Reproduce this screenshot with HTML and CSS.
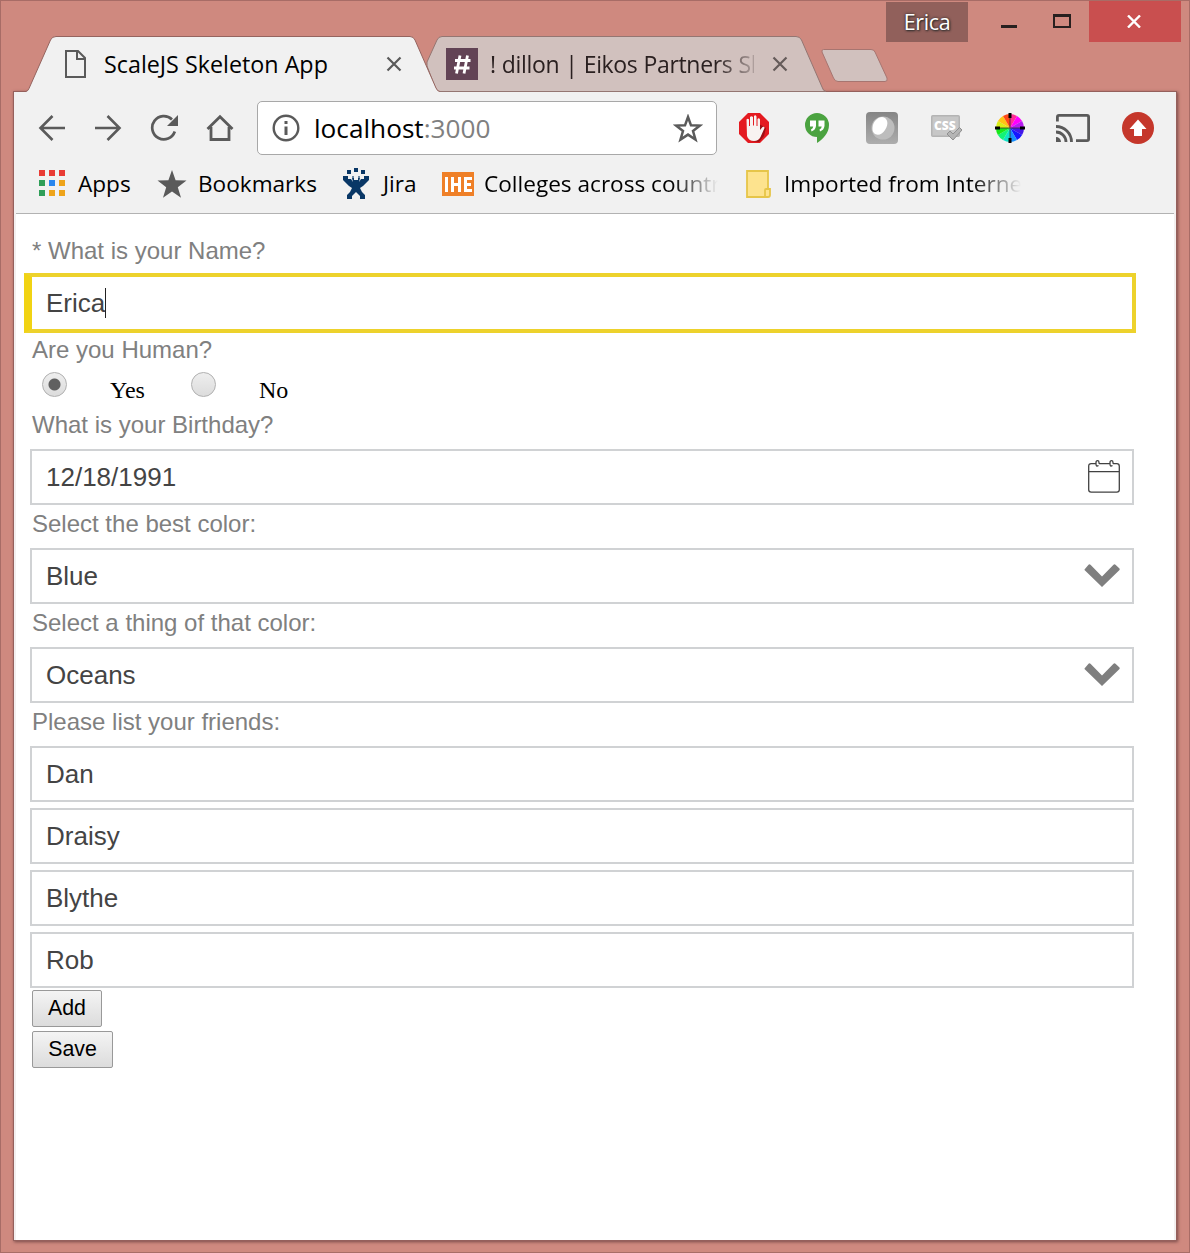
FILE: index.html
```html
<!DOCTYPE html>
<html lang="en">
<head>
<meta charset="utf-8">
<title>ScaleJS Skeleton App</title>
<link rel="stylesheet" href="styles.css">
</head>
<body>
<div class="window">
  <header class="titlebar">
    <div class="tabs">
      <div class="tab tab-active">
        <svg class="tab-shape" width="414" height="57" viewBox="0 0 414 57"><path d="M0 55.5Q2 55 3 52.500L24.500 4Q26 .5 30 .5H384Q387.500 .5 389 4L410 52Q411.500 55.500 414 55.500V57H0Z" fill="#f1f1f1"/><path d="M0 55.5Q2 55 3 52.500L24.500 4Q26 .5 30 .5H384Q387.500 .5 389 4L410 52Q411.500 55.500 414 55.500" fill="none" stroke="#95645f"/></svg>
        <svg class="icon page-icon" width="22" height="28" viewBox="0 0 22 28"><path d="M1 1H13L20 8V27H1ZM12 1V9H20" fill="none" stroke="#5a5a5a" stroke-width="2"/></svg>
        <span class="tab-title title-active">ScaleJS Skeleton App</span>
        <svg class="icon tab-close" width="16" height="16" viewBox="0 0 16 16"><path d="M1.500 1.500L14.500 14.500M14.500 1.500L1.500 14.500" stroke="#5a5a5a" stroke-width="2.200"/></svg>
      </div>
      <div class="tab tab-idle">
        <svg class="tab-shape" width="400" height="56" viewBox="0 0 400 56"><path d="M12 55.500Q10 54 9 51L1 30V26L11 4Q12.500 .5 16 .5H370Q374 .5 375.500 4L396 51Q397 55 400 55.500Z" fill="#d1c1be" stroke="#947672"/></svg>
        <svg class="icon hash-icon" width="32" height="32" viewBox="0 0 32 32"><path d="M0 0H32V32H0Z" fill="#624355"/><path d="M14 7.500L10.500 25.500M21.500 7.500L18 25.500M9 12.500H24.500M8 20H23.500" stroke="#fff" stroke-width="2.800"/></svg>
        <span class="tab-title title-idle">! dillon | Eikos Partners Sl</span>
        <svg class="icon tab-close" width="16" height="16" viewBox="0 0 16 16"><path d="M1.500 1.500L14.500 14.500M14.500 1.500L1.500 14.500" stroke="#655b5a" stroke-width="2.200"/></svg>
      </div>
      <svg class="new-tab" width="68" height="33" viewBox="0 0 68 33"><path d="M2.500 .5H50Q53 .5 54 3L66 29Q67 32.500 64 32.500H17Q14 32.500 12.500 29L1 3Q.5 .5 2.500 .5Z" fill="#d1c1be" stroke="#a77570"/></svg>
    </div>
    <div class="controls">
      <span class="profile">Erica</span>
      <svg class="minimize" width="16" height="3" viewBox="0 0 16 3"><path d="M0 0H16V3H0Z" fill="#27201f"/></svg>
      <svg class="maximize" width="18" height="14" viewBox="0 0 18 14"><path d="M0 0H18V14H0ZM2 3V12H16V3Z" fill="#27201f" fill-rule="evenodd"/></svg>
      <span class="window-close"><svg class="icon" width="14" height="13" viewBox="0 0 14 13"><path d="M1 .5L13 12.500M13 .5L1 12.500" stroke="#fff" stroke-width="2.400"/></svg></span>
    </div>
  </header>

  <main class="frame">
    <div class="toolbar">
      <nav class="navrow">
        <svg class="icon back" width="28" height="28" viewBox="0 0 28 28"><path d="M27 14H3M14.500 2L2.500 14L14.500 26" fill="none" stroke="#5a5a5a" stroke-width="2.600"/></svg>
        <svg class="icon forward" width="28" height="28" viewBox="0 0 28 28"><path d="M1 14H25M13.500 2L25.500 14L13.500 26" fill="none" stroke="#5a5a5a" stroke-width="2.600"/></svg>
        <svg class="icon reload" width="28" height="28" viewBox="0 0 28 28"><path d="M22 5.500A11.600 11.600 0 1 0 24.800 17.500" fill="none" stroke="#5a5a5a" stroke-width="2.700"/><path d="M28 1V12H17Z" fill="#5a5a5a"/></svg>
        <svg class="icon home" width="28" height="28" viewBox="0 0 28 28"><path d="M1.500 15L14 2.800L26.500 15M5 13V25.500H23V13" fill="none" stroke="#5a5a5a" stroke-width="2.800"/></svg>
        <div class="omnibox">
          <svg class="icon" width="28" height="28" viewBox="0 0 28 28"><circle cx="14" cy="14" r="12.300" fill="none" stroke="#5a5a5a" stroke-width="2.400"/><path d="M12.500 7H15.500V10H12.500ZM12.500 12.500H15.500V21H12.500Z" fill="#5a5a5a"/></svg>
          <span class="url">localhost<span class="port">:3000</span></span>
          <svg class="icon" width="30" height="29" viewBox="0 0 30 29"><path d="M15 3L18 11.300L27 11.600L20 17L22.500 25.500L15 20.600L7.500 25.500L10 17L3 11.600L12 11.300Z" fill="none" stroke="#5a5a5a" stroke-width="2.500"/></svg>
        </div>
        <svg class="icon ext-block" width="30" height="30" viewBox="0 0 30 30"><path d="M9 0H21L30 9V21L21 30H9L0 21V9Z" fill="#e41a20"/><path d="M20 11L27 15L25 23L20 29L12 28Z" fill="#9d1015"/><path d="M7.500 6.500Q8.800 5 10 6.500V13H11V4Q12.500 2.500 14 4V12.500H15V3Q16.500 1.500 17.500 3.500V13H18.500V6Q20 4.500 21 6.500V17L23.500 14Q25.500 13 25.500 15L21.500 24Q19.500 28 15 28Q9.500 28 8 23Z" fill="#f8f3f1"/></svg>
        <svg class="icon ext-chat" width="24" height="30" viewBox="0 0 24 30"><path d="M12 0A12 12 0 0 1 24 12C24 20 18 26 12 30V24A12 12 0 0 1 12 0Z" fill="#4ba340"/><path d="M5 7.500H11V13Q10.500 17 6.500 18.500L6 16.500Q8.200 15.500 8.200 13.500H5ZM13.500 7.500H19.500V13Q19 17 15 18.500L14.500 16.500Q16.700 15.500 16.700 13.500H13.500Z" fill="#fff"/></svg>
        <svg class="icon ext-orb" width="32" height="32" viewBox="0 0 32 32"><defs><linearGradient id="orb" x2="0" y2="1"><stop stop-color="#858585"/><stop offset="1" stop-color="#adadad"/></linearGradient></defs><rect width="32" height="32" rx="4" fill="url(#orb)"/><circle cx="17" cy="16" r="11.500" fill="#bdbdbd"/><path d="M6.500 16C7 9 12 5 16 5C22 6 23 12 19 18C15 25 6 24 6.500 16Z" fill="#fff"/></svg>
        <svg class="icon ext-css" width="31" height="28" viewBox="0 0 31 28"><rect x=".75" y="1.750" width="27.500" height="20.500" rx="1" fill="#c7c7c7" stroke="#b4b4b4" stroke-width="1.500"/><text x="3" y="16" class="css-label">CSS</text><path d="M16 20L19 17L22 20L28.500 13.500L31 16L22 26Z" fill="#b5b5b5" stroke="#909090"/></svg>
        <svg class="icon ext-wheel" width="30" height="30" viewBox="0 0 30 30"><path d="M15 15V1A14 14 0 0 1 22 2.900Z" fill="#ff2c94"/><path d="M15 15L22 2.900A14 14 0 0 1 27.100 8Z" fill="#f0f"/><path d="M15 15L27.100 8A14 14 0 0 1 29 15Z" fill="#b51cf0"/><path d="M15 15H29A14 14 0 0 1 27.100 22Z" fill="#4317e8"/><path d="M15 15L27.100 22A14 14 0 0 1 22 27.100Z" fill="#1616ff"/><path d="M15 15L22 27.100A14 14 0 0 1 15 29Z" fill="#168eff"/><path d="M15 15V29A14 14 0 0 1 8 27.100Z" fill="#10e4c8"/><path d="M15 15L8 27.100A14 14 0 0 1 2.900 22Z" fill="#12f477"/><path d="M15 15L2.900 22A14 14 0 0 1 1 15Z" fill="#19e819"/><path d="M15 15H1A14 14 0 0 1 2.900 8Z" fill="#d9ef16"/><path d="M15 15L2.900 8A14 14 0 0 1 8 2.900Z" fill="#ffc414"/><path d="M15 15L8 2.900A14 14 0 0 1 15 1Z" fill="#ff481a"/><path d="M15 4V26M4 15H26" stroke="#333" stroke-width=".8"/><path d="M13.500 0H16.500V5H13.500ZM13.500 25H16.500V30H13.500ZM0 13.500H5V16.500H0ZM25 13.500H30V16.500H25Z" fill="#000"/></svg>
        <svg class="icon ext-cast" width="34" height="28" viewBox="0 0 34 28"><path d="M1.400 7.500V3Q1.400 1.400 3 1.400H31Q32.600 1.400 32.600 3V25Q32.600 26.600 31 26.600H20" fill="none" stroke="#5a5a5a" stroke-width="2.800"/><path d="M0 12.500A15.500 15.500 0 0 1 15.500 28M0 18A10 10 0 0 1 10 28" fill="none" stroke="#5a5a5a" stroke-width="2.800"/><path d="M0 23A5 5 0 0 1 5 28H0Z" fill="#5a5a5a"/></svg>
        <svg class="icon ext-up" width="32" height="32" viewBox="0 0 32 32"><circle cx="16" cy="16" r="16" fill="#c5372b"/><path d="M16 7.500L24.500 17H20V24H12V17H7.500Z" fill="#fff"/></svg>
      </nav>
      <nav class="bookmarks">
        <svg class="icon bm-apps" width="26" height="26" viewBox="0 0 26 26"><path d="M0 0H6V6H0ZM10 0H16V6H10ZM20 0H26V6H20Z" fill="#e93c35"/><path d="M0 10H6V16H0ZM0 20H6V26H0Z" fill="#2f9e58"/><path d="M10 10H16V16H10Z" fill="#2a87ee"/><path d="M20 10H26V16H20ZM10 20H16V26H10ZM20 20H26V26H20Z" fill="#eea41b"/></svg>
        <span class="bm bm-t1">Apps</span>
        <svg class="icon" width="30" height="28" viewBox="0 0 30 28"><path d="M15 0L18.600 10.200L29.500 10.600L20.800 17.200L24 27.800L15 21.500L6 27.800L9.200 17.200L.5 10.600L11.400 10.200Z" fill="#5a5a5a"/></svg>
        <span class="bm bm-t2">Bookmarks</span>
        <svg class="icon" width="26" height="32" viewBox="0 0 26 32"><path d="M11 0H15V4H11ZM4 2H8V6H4ZM18 2H22V6H18ZM0 8H5V11H8L10 14L9 10H11V12H15V10H17L16 14L18 11H21V8H26V12L20 18L17 20L19 24L22 27V31H17V28L13 24L9 28V31H4V27L7 24L9 20L6 18L0 12Z" fill="#093766"/><path d="M9 8H11V10H9ZM15 8H17V10H15Z" fill="#6c88a2"/></svg>
        <span class="bm bm-t3">Jira</span>
        <svg class="icon" width="32" height="24" viewBox="0 0 32 24"><path d="M0 0H32V24H0Z" fill="#ef8028"/><path d="M3 5H6V20H3ZM9 5H12V11H16V5H19V20H16V14H12V20H9ZM22 5H30V8H25V11H29V14H25V17H30V20H22Z" fill="#fff"/></svg>
        <span class="bm bm-t4">Colleges across countr</span>
        <svg class="icon" width="25" height="28" viewBox="0 0 25 28"><path d="M1 1H22V18.500H24V27H1Z" fill="#fde38e"/><path d="M19 27H1V1H22V19M19 27V20Q19 19 20 19H24V25Q24 27 22 27Z" fill="none" stroke="#e6c549" stroke-width="1.800"/></svg>
        <span class="bm bm-t5">Imported from Interne</span>
      </nav>
    </div>

    <form class="form">
      <label class="label" for="name">* What is your Name?</label>
      <div class="field focused" id="name"><span>Erica</span><i class="caret"></i></div>
      <div class="label">Are you Human?</div>
      <div class="radios">
        <span class="radio checked"></span><span class="choice choice-yes">Yes</span>
        <span class="radio"></span><span class="choice">No</span>
      </div>
      <div class="label">What is your Birthday?</div>
      <div class="field"><span class="date">12/18/1991</span>
        <svg class="calendar" width="32" height="33" viewBox="0 0 32 33"><path d="M7.500 3.700H3.200Q.7 3.700 .7 6.200V29.800Q.7 32.200 3.200 32.200H28.800Q31.300 32.200 31.300 29.800V6.200Q31.300 3.700 28.800 3.700H25M11 3.700H21.500M.7 11.700H31.300M10.500 5.500Q8 7 8 4V2.500Q8 .7 9.500 .7T11 2.500V3.700M24.500 5.500Q22 7 22 4V2.500Q22 .7 23.500 .7T25 2.500V3.700" fill="none" stroke="#424242" stroke-width="1.300"/></svg>
      </div>
      <div class="label">Select the best color:</div>
      <div class="field"><span>Blue</span>
        <svg class="chevron" width="36" height="23" viewBox="0 0 36 23"><path d="M.5 5.500L4.500 .7Q5.300 0 6.500 .7L18 12.500L29.500 .7Q30.700 0 31.500 .7L35.500 4.500Q36 5.200 35.500 6L18 23L.5 6Z" fill="#7f7f7f"/></svg>
      </div>
      <div class="label">Select a thing of that color:</div>
      <div class="field"><span>Oceans</span>
        <svg class="chevron" width="36" height="23" viewBox="0 0 36 23"><path d="M.5 5.500L4.500 .7Q5.300 0 6.500 .7L18 12.500L29.500 .7Q30.700 0 31.500 .7L35.500 4.500Q36 5.200 35.500 6L18 23L.5 6Z" fill="#7f7f7f"/></svg>
      </div>
      <div class="label">Please list your friends:</div>
      <div class="list">
        <div class="field">Dan</div>
        <div class="field">Draisy</div>
        <div class="field">Blythe</div>
        <div class="field">Rob</div>
      </div>
      <div class="actions">
        <button class="button" type="button">Add</button>
        <button class="button button-save" type="button">Save</button>
      </div>
    </form>
  </main>
</div>
</body>
</html>
```
FILE: styles.css
```css
* { box-sizing: border-box; }

body {
  margin: 0;
  background: #cf897f;
}

svg { display: block; flex: none; }

.window {
  width: 1190px;
  height: 1253px;
  padding: 0 13px 12px;
  border: 1px solid #a86c66;
  display: flex;
  flex-direction: column;
  font-family: "Open Sans", sans-serif;
  overflow: hidden;
}

/* Title bar */
.titlebar {
  position: relative;
  z-index: 1;
  height: 91px;
  flex: none;
  display: flex;
  justify-content: space-between;
  align-items: flex-start;
}

.tabs {
  display: flex;
  flex: none;
  padding: 35px 0 0 12px;
  margin-right: -20px;
}

.tab {
  position: relative;
  height: 56px;
  display: flex;
  align-items: center;
}

.tab-shape {
  position: absolute;
  top: 0;
  left: 0;
}

.tab .icon, .tab-title { position: relative; }

.tab-active {
  width: 414px;
  padding-left: 39px;
  z-index: 1;
}

.tab-idle {
  width: 400px;
  margin-left: -14px;
  padding-left: 20px;
}

.tab-title {
  font-size: 23.300px;
  line-height: 30px;
  margin-top: -1px;
  white-space: nowrap;
}

.title-active {
  width: 260px;
  margin: -1px 22px 0 17px;
  color: #000;
}

.title-idle {
  width: 264px;
  margin: -1px 18px 0 12px;
  color: #2a2020;
  font-size: 23px;
  letter-spacing: -.35px;
  word-spacing: .5px;
  mask-image: linear-gradient(90deg, #000 225px, transparent 274px);
}

.new-tab {
  margin: 13px 0 0 -5px;
}

.controls {
  display: flex;
  flex: none;
  align-items: flex-start;
  margin-right: -5px;
}

.profile {
  width: 82px;
  height: 40px;
  margin-top: 1px;
  background: #91605b;
  color: #fff;
  font-size: 21.500px;
  letter-spacing: -.4px;
  line-height: 40px;
  text-align: center;
  text-shadow: 0 0 3px #222, 1px 1px 2px #333;
}

.minimize { margin: 24px 0 0 33px; }
.maximize { margin: 13px 0 0 36px; }

.window-close {
  width: 92px;
  height: 41px;
  margin-left: 18px;
  padding-left: 38px;
  display: flex;
  align-items: center;
  background: #c94f4f;
}

/* Browser frame */
.frame {
  flex: 1;
  background: #fff;
  border: solid #f3efef;
  border-width: 0 2px;
  box-shadow: 0 0 0 1px #95605c, 1px 1px 3px 1px #794b48;
  display: flex;
  flex-direction: column;
}

.toolbar {
  height: 122px;
  padding-top: 9px;
  background: #f1f1f1;
  border-bottom: 1px solid #b2b2b2;
}

.navrow {
  display: flex;
  align-items: center;
  height: 54px;
  padding-left: 22px;
}

.forward, .reload, .home { margin-left: 28px; }

.omnibox {
  width: 460px;
  height: 54px;
  margin-left: 23px;
  padding: 0 13px 0 14px;
  display: flex;
  align-items: center;
  background: #fff;
  border: 1px solid #a8a8a8;
  border-radius: 5px;
}

.url {
  flex: 1;
  margin-left: 14px;
  font-size: 26.200px;
  line-height: 48px;
  color: #000;
}

.port { color: #808080; }

.ext-block { margin-left: 22px; }
.ext-chat { margin-left: 36px; }
.ext-orb { margin-left: 37px; }
.ext-css { margin-left: 33px; }
.ext-wheel { margin-left: 33px; }
.ext-cast { margin-left: 31px; }
.ext-up { margin-left: 32px; }

.css-label {
  font: 800 12px "Open Sans", sans-serif;
  fill: #fff;
}

.bookmarks {
  height: 57px;
  display: flex;
  align-items: center;
  padding-left: 23px;
}

.bm-apps { margin-bottom: 1px; }

.bm {
  font-size: 22.600px;
  line-height: 34px;
  color: #000;
  white-space: nowrap;
}

.bm-t1 { width: 92px; padding-left: 13px; }
.bm-t2 { width: 156px; padding-left: 11px; }
.bm-t3 { width: 73px; padding-left: 14px; }
.bm-t4 { width: 272px; padding-left: 10px; mask-image: linear-gradient(90deg, #000 198px, transparent 244px); }
.bm-t5 { width: 252px; padding-left: 13px; mask-image: linear-gradient(90deg, #000 200px, transparent 250px); }

/* Form */
.form {
  width: 1104px;
  margin: 18px 0 0 14px;
  font-family: "Liberation Sans", Arial, sans-serif;
}

.label {
  display: block;
  height: 43px;
  padding-left: 2px;
  font-size: 24px;
  line-height: 38px;
  color: #808080;
}

.field {
  height: 56px;
  padding: 0 12px 0 14px;
  display: flex;
  align-items: center;
  justify-content: space-between;
  border: 2px solid #d0d2d4;
  background: #fff;
  font-size: 26px;
  line-height: 52px;
  color: #444;
}

.focused {
  height: 60px;
  margin: -2px -2px -2px -6px;
  padding-left: 14px;
  justify-content: flex-start;
  border: 4px solid #edd22c;
  border-left: 8px solid #f1d313;
}

.caret {
  width: 1px;
  height: 30px;
  background: #222;
}

.calendar { margin-bottom: 1px; }
.chevron { margin-bottom: 2px; }

.radios {
  height: 32px;
  display: flex;
  align-items: flex-start;
  padding-left: 12px;
}

.radio {
  width: 25px;
  height: 25px;
  margin-top: -2px;
  border: 1px solid #b0b0b0;
  border-radius: 50%;
  background: linear-gradient(#eee, #dcdcdc);
}

.checked {
  background: radial-gradient(circle, #606060 5.500px, transparent 6.500px), linear-gradient(#eee, #dcdcdc);
}

.choice {
  margin-left: 43px;
  font: 24px/32px "Liberation Serif", "Times New Roman", serif;
  color: #000;
}

.choice-yes { width: 81px; }

.list {
  display: grid;
  row-gap: 6px;
}

.actions {
  display: flex;
  flex-direction: column;
  align-items: flex-start;
  gap: 4px;
  padding: 2px 0 0 2px;
}

.button {
  width: 70px;
  height: 37px;
  padding: 0;
  border: 1px solid #999;
  border-radius: 2px;
  background: linear-gradient(#f4f4f4, #dcdcdc);
  font: 21.330px "Liberation Sans", Arial, sans-serif;
  color: #000;
}

.button-save { width: 81px; }
```
